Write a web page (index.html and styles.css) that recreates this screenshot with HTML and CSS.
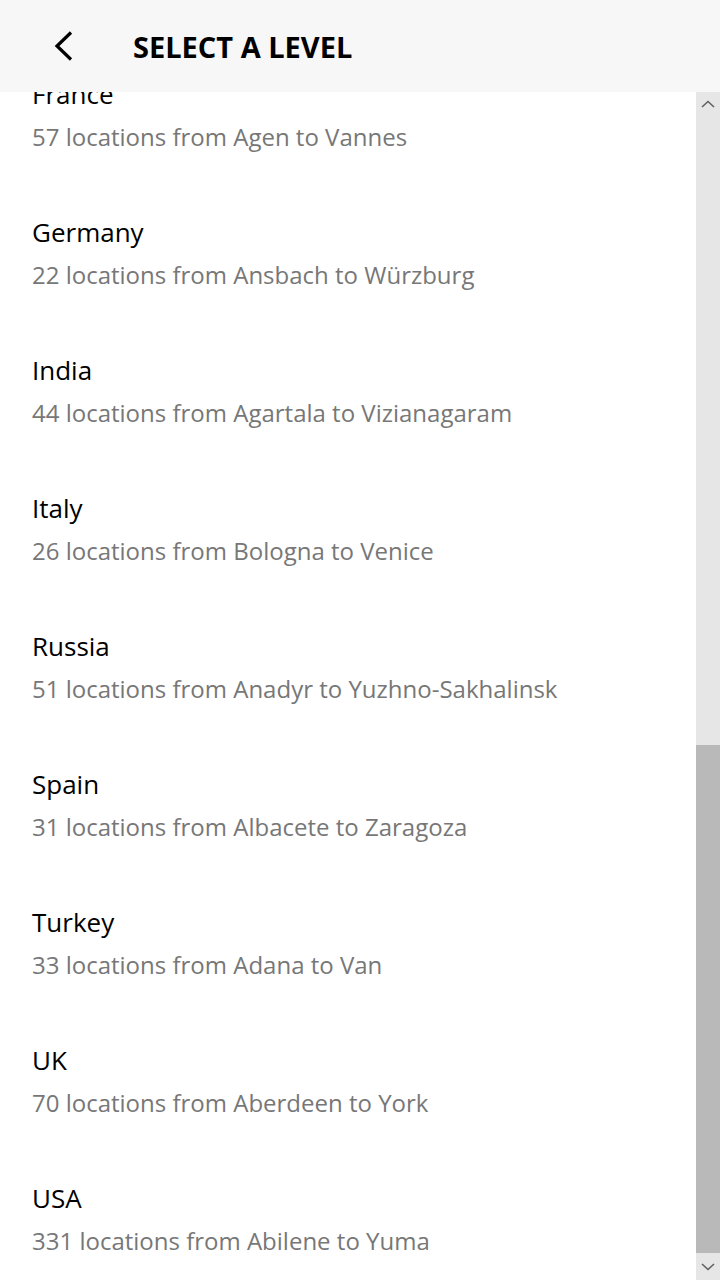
FILE: index.html
```html
<!DOCTYPE html>
<html lang="en">
<head>
<meta charset="utf-8">
<title>Select a level</title>
<link rel="stylesheet" href="styles.css">
</head>
<body>
<div class="app">
  <header class="topbar">
    <button class="back" aria-label="Back">
      <svg width="24" height="32" viewBox="0 0 24 32"><polyline points="19,2.5 5,16 19,29.5" fill="none" stroke="#000" stroke-width="3.2" stroke-linecap="butt" stroke-linejoin="miter"/></svg>
    </button>
    <h1 class="title">SELECT A LEVEL</h1>
  </header>
  <div class="body">
    <div class="viewport">
      <ul class="list">
        <li class="item"><div class="name">France</div><div class="desc">57 locations from Agen to Vannes</div></li>
        <li class="item"><div class="name">Germany</div><div class="desc">22 locations from Ansbach to Würzburg</div></li>
        <li class="item"><div class="name">India</div><div class="desc">44 locations from Agartala to Vizianagaram</div></li>
        <li class="item"><div class="name">Italy</div><div class="desc">26 locations from Bologna to Venice</div></li>
        <li class="item"><div class="name">Russia</div><div class="desc">51 locations from Anadyr to Yuzhno-Sakhalinsk</div></li>
        <li class="item"><div class="name">Spain</div><div class="desc">31 locations from Albacete to Zaragoza</div></li>
        <li class="item"><div class="name">Turkey</div><div class="desc">33 locations from Adana to Van</div></li>
        <li class="item"><div class="name">UK</div><div class="desc">70 locations from Aberdeen to York</div></li>
        <li class="item"><div class="name">USA</div><div class="desc">331 locations from Abilene to Yuma</div></li>
      </ul>
    </div>
    <div class="scrollbar">
      <div class="arrow up"><svg width="14" height="8" viewBox="0 0 14 8"><polyline points="1,7 7,1.5 13,7" fill="none" stroke="#606060" stroke-width="1.6"/></svg></div>
      <div class="track"><div class="thumb"></div></div>
      <div class="arrow down"><svg width="14" height="8" viewBox="0 0 14 8"><polyline points="1,1 7,6.5 13,1" fill="none" stroke="#606060" stroke-width="1.6"/></svg></div>
    </div>
  </div>
</div>
</body>
</html>
```
FILE: styles.css
```css
* { box-sizing: border-box; }
html, body { margin: 0; padding: 0; }
body {
  width: 720px;
  height: 1280px;
  overflow: hidden;
  background: #fff;
  font-family: "Open Sans", "Noto Sans", sans-serif;
}
.app {
  display: flex;
  flex-direction: column;
  height: 1280px;
}
.topbar {
  height: 92px;
  flex: none;
  background: #f7f7f7;
  display: flex;
  align-items: center;
  padding-left: 52px;
  position: relative;
  z-index: 1;
}
.back {
  border: 0;
  background: none;
  padding: 0;
  margin: 0;
  width: 24px;
  height: 32px;
  display: flex;
}
.title {
  margin: 0 0 0 57px;
  font-size: 29px;
  font-weight: 700;
  color: #000;
  letter-spacing: 0;
}
.body {
  flex: 1;
  display: flex;
  min-height: 0;
}
.viewport {
  flex: 1;
  overflow: hidden;
}
.list {
  list-style: none;
  margin: -46px 0 0 0;
  padding: 0;
}
.item {
  height: 138px;
  padding: 30px 32px 0;
}
.name {
  font-size: 26px;
  line-height: 36px;
  color: #000;
}
.desc {
  margin-top: 7px;
  font-size: 24px;
  line-height: 36px;
  color: #777;
}
.scrollbar {
  width: 24px;
  flex: none;
  background: #e6e6e6;
  display: flex;
  flex-direction: column;
}
.arrow {
  height: 24px;
  display: flex;
  align-items: center;
  justify-content: center;
  flex: none;
}
.arrow.down {
  height: 27px;
}
.track {
  flex: 1;
  display: flex;
  flex-direction: column;
  justify-content: flex-end;
}
.thumb {
  height: 508px;
  background: #b9b9b9;
}
```
